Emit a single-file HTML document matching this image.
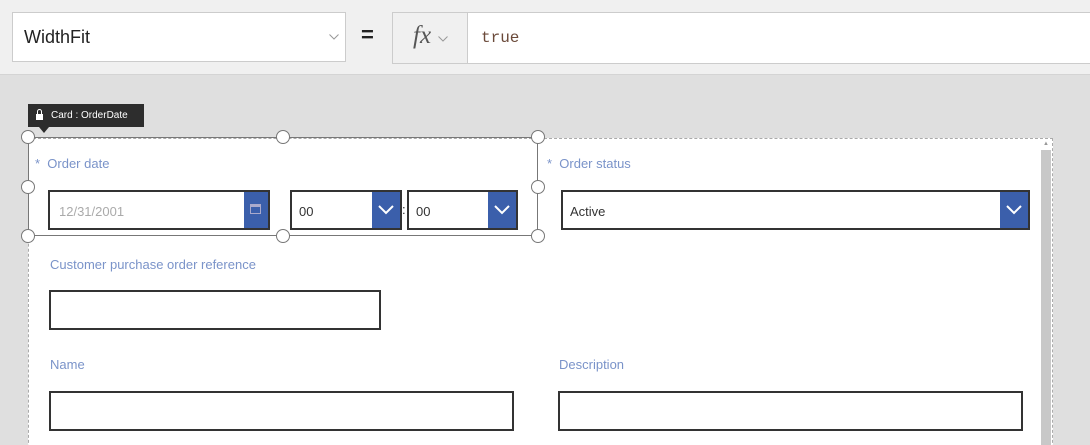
<!DOCTYPE html>
<html><head><style>
*{box-sizing:border-box;margin:0;padding:0}
html,body{width:1090px;height:445px;overflow:hidden}
body{background:#dfdfdf;font-family:"Liberation Sans",sans-serif;position:relative}
.abs{position:absolute}
.lbl{position:absolute;color:#7a93c9;font-size:13px}
.inp{position:absolute;border:2px solid #333;background:#fff}
.dd{position:absolute;right:0;top:0;bottom:0;width:28px;background:#3b5fab}
.h{position:absolute;width:14px;height:14px;border:1px solid #777;border-radius:50%;background:#fff}
</style></head><body>
<div class="abs" style="left:0;top:0;width:1090px;height:75px;background:#f0f0f0;border-bottom:1px solid #d4d4d4"></div>
<div class="abs" style="left:12px;top:12px;width:334px;height:50px;background:#fff;border:1px solid #ccc;font-size:18px;padding:14px 0 0 11px;color:#222">WidthFit
<svg class="abs" style="left:316px;top:21px" width="10" height="6"><path d="M0.5 0.5L5 5L9.5 0.5" stroke="#999" fill="none"/></svg></div>
<div class="abs" style="left:361px;top:22px;font-size:22px;font-weight:bold;color:#222">=</div>
<div class="abs" style="left:392px;top:12px;width:76px;height:52px;background:#f0f0f0;border:1px solid #ccc;"><span style="position:absolute;left:20px;top:9px;font-family:'Liberation Serif',serif;font-style:italic;font-size:25px;color:#555">fx</span>
<svg class="abs" style="left:45px;top:23px" width="10" height="6"><path d="M0.5 0.5L5 5L9.5 0.5" stroke="#999" fill="none"/></svg></div>
<div class="abs" style="left:467px;top:12px;width:630px;height:52px;background:#fff;border:1px solid #ccc;font-family:'Liberation Mono',monospace;font-size:16px;color:#6b4a3a;padding:16px 0 0 13px">true</div>

<div class="abs" style="left:28px;top:138px;width:1025px;height:320px;background:#fff;border:1px dashed #aaa"></div>
<div class="abs" style="left:1041px;top:150px;width:10px;height:300px;background:#c8c8c8"></div>
<div class="abs" style="left:1043px;top:141px;font-size:6px;color:#999">▲</div>

<div class="abs" style="left:28px;top:104px;width:116px;height:23px;background:#2d2d2d;color:#fff;font-size:10px;padding:6px 0 0 23px">Card : OrderDate</div>
<div class="abs" style="left:36px;top:114px;width:7px;height:6px;background:#fff"></div>
<div class="abs" style="left:37px;top:109px;width:5px;height:7px;border:1.5px solid #fff;border-radius:3px 3px 0 0"></div>
<div class="abs" style="left:39px;top:127px;border-left:5px solid transparent;border-right:5px solid transparent;border-top:6px solid #2d2d2d"></div>

<div class="abs" style="left:28px;top:137px;width:510px;height:99px;border:1px solid #777"></div>

<div class="lbl" style="left:35px;top:156px">*&nbsp; Order date</div>
<div class="inp" style="left:48px;top:190px;width:222px;height:40px;font-size:13px;color:#aaa;padding:12px 0 0 9px">12/31/2001<div class="dd" style="width:24px"><div style="position:absolute;left:6px;top:12px;width:11px;height:10px;border:1.5px solid #aac;border-top-width:3px"></div></div></div>
<div class="inp" style="left:290px;top:190px;width:112px;height:40px;font-size:13px;color:#333;padding:12px 0 0 7px">00<div class="dd"><svg style="position:absolute;left:6px;top:13px" width="16" height="10"><path d="M1 1L8 8L15 1" stroke="#fff" stroke-width="2" fill="none"/></svg></div></div>
<div class="abs" style="left:402px;top:202px;font-size:13px;color:#333">:</div>
<div class="inp" style="left:407px;top:190px;width:111px;height:40px;font-size:13px;color:#333;padding:12px 0 0 7px">00<div class="dd"><svg style="position:absolute;left:6px;top:13px" width="16" height="10"><path d="M1 1L8 8L15 1" stroke="#fff" stroke-width="2" fill="none"/></svg></div></div>

<div class="lbl" style="left:547px;top:156px">*&nbsp; Order status</div>
<div class="inp" style="left:561px;top:190px;width:469px;height:40px;font-size:13px;color:#333;padding:12px 0 0 7px">Active<div class="dd"><svg style="position:absolute;left:6px;top:13px" width="16" height="10"><path d="M1 1L8 8L15 1" stroke="#fff" stroke-width="2" fill="none"/></svg></div></div>

<div class="lbl" style="left:50px;top:257px">Customer purchase order reference</div>
<div class="inp" style="left:49px;top:290px;width:332px;height:40px"></div>
<div class="lbl" style="left:50px;top:357px">Name</div>
<div class="inp" style="left:49px;top:391px;width:465px;height:40px"></div>
<div class="lbl" style="left:559px;top:357px">Description</div>
<div class="inp" style="left:558px;top:391px;width:465px;height:40px"></div>

<div class="h" style="left:21px;top:130px"></div>
<div class="h" style="left:276px;top:130px"></div>
<div class="h" style="left:531px;top:130px"></div>
<div class="h" style="left:21px;top:180px"></div>
<div class="h" style="left:531px;top:180px"></div>
<div class="h" style="left:21px;top:229px"></div>
<div class="h" style="left:276px;top:229px"></div>
<div class="h" style="left:531px;top:229px"></div>
</body></html>
